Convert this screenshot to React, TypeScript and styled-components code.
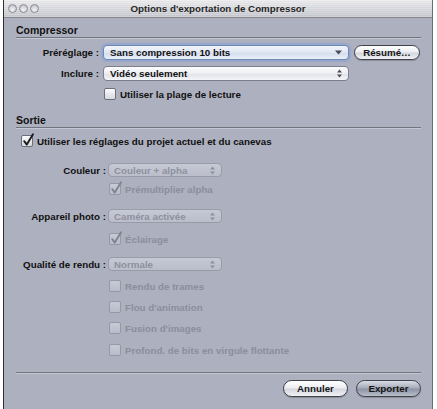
import React from 'react';
import styled, { createGlobalStyle, css } from 'styled-components';

const Global = createGlobalStyle`
  html, body { margin: 0; padding: 0; background: #ffffff; }
  body { font-family: "Liberation Sans", Arial, sans-serif; }
  * { box-sizing: border-box; }
`;

const Window = styled.div`
  margin-left: 3px;
  width: 430px;
  height: 409px;
  border-left: 1px solid #2e2f33;
  border-right: 1px solid #6a6c74;
  background: #adb0be;
  display: flex;
  flex-direction: column;
  overflow: hidden;
`;

const TitleBar = styled.div`
  height: 18px;
  flex: none;
  display: grid;
  grid-template-columns: 1fr auto 1fr;
  align-items: center;
  border-bottom: 1px solid #85878f;
  background:
    repeating-linear-gradient(180deg, rgba(255,255,255,0.18) 0 1px, rgba(0,0,0,0.02) 1px 2px),
    linear-gradient(#ececee, #d4d5da 60%, #c7c8ce);
`;

const Lights = styled.div`
  display: flex;
  gap: 2px;
  padding-left: 4px;
`;

const Light = styled.span`
  width: 9px;
  height: 9px;
  border-radius: 50%;
  border: 1px solid #8b8c93;
  background: radial-gradient(circle at 50% 70%, #f4f4f6, #c9cad0 70%, #b5b6bd);
`;

const Title = styled.div`
  font-weight: bold;
  font-size: 9.75px;
  color: #262626;
  white-space: nowrap;
`;

const Body = styled.div`
  padding: 0 11px 0 12px;
  display: flex;
  flex-direction: column;
`;

const SectionTitle = styled.div<{ $top: number }>`
  margin-top: ${(p) => p.$top}px;
  height: 14px;
  line-height: 12px;
  font-weight: bold;
  font-size: 10.5px;
  color: #111;
  border-bottom: 1px solid #72747e;
  box-shadow: 0 1px 0 rgba(220, 222, 230, 0.5);
`;

const FieldRow = styled.div<{ $top: number; $label: number; $gap: number; $indent?: number }>`
  margin-top: ${(p) => p.$top}px;
  padding-left: ${(p) => p.$indent ?? 0}px;
  display: grid;
  grid-template-columns: ${(p) => p.$label}px 1fr;
  column-gap: ${(p) => p.$gap}px;
  align-items: center;
`;

const Label = styled.div`
  text-align: right;
  font-weight: bold;
  font-size: 9.75px;
  color: #111;
  white-space: nowrap;
`;

const Controls = styled.div`
  display: flex;
  align-items: center;
  gap: 5px;
`;

type PopupState = 'focus' | 'normal' | 'disabled';

const Popup = styled.div<{ $width: number; $height: number; $state: PopupState }>`
  width: ${(p) => p.$width}px;
  height: ${(p) => p.$height}px;
  border-radius: 4px;
  display: flex;
  align-items: center;
  justify-content: space-between;
  padding: 0 6px 0 6px;
  font-weight: bold;
  font-size: 9.75px;
  white-space: nowrap;
  ${(p) =>
    p.$state === 'focus'
      ? css`
          color: #111;
          border: 1px solid #6f87b4;
          background: linear-gradient(#f3f6fc, #dfe6f3 50%, #d3dced 52%, #e9eef8);
          box-shadow: 0 0 1px 2px rgba(130, 160, 215, 0.55);
        `
      : p.$state === 'normal'
      ? css`
          color: #111;
          border: 1px solid #7c7f8c;
          background: linear-gradient(#fdfdfe, #eceef2 50%, #dfe2e8 52%, #f4f5f8);
        `
      : css`
          color: #8d909e;
          padding-left: 5px;
          border: 1px solid #989ba8;
          background: linear-gradient(#c6c9d4, #bbbeca);
        `}
`;

const PushButton = styled.div<{ $width: number; $height: number; $default?: boolean }>`
  width: ${(p) => p.$width}px;
  height: ${(p) => p.$height}px;
  border-radius: ${(p) => p.$height / 2}px;
  border: 1px solid #3f4148;
  display: flex;
  align-items: center;
  justify-content: center;
  font-weight: bold;
  font-size: 9.75px;
  color: #151515;
  box-shadow: 0 1px 1px rgba(0, 0, 0, 0.2);
  background: ${(p) =>
    p.$default
      ? 'linear-gradient(#d9dde6, #a7adbb 45%, #8c93a4 55%, #b9bfcc)'
      : 'linear-gradient(#ffffff, #eceef2 45%, #d3d6de 55%, #f1f2f5)'};
`;

const CheckRow = styled.label<{ $disabled?: boolean }>`
  display: flex;
  align-items: center;
  gap: 4px;
  font-weight: bold;
  font-size: 9.75px;
  white-space: nowrap;
  color: ${(p) => (p.$disabled ? '#8b8e9c' : '#111')};
`;

const Box = styled.span<{ $disabled?: boolean }>`
  position: relative;
  flex: none;
  width: 12px;
  height: 12px;
  border-radius: 2px;
  border: 1px solid ${(p) => (p.$disabled ? '#9598a6' : '#6c6f7a')};
  background: ${(p) =>
    p.$disabled
      ? 'linear-gradient(#c7cad5, #babdc9)'
      : 'linear-gradient(#fdfdfe, #e6e8ed 50%, #d8dbe2)'};
`;

const Tick = styled.svg`
  position: absolute;
  left: 0;
  top: -3px;
  overflow: visible;
`;

const Separator = styled.div<{ $top: number }>`
  margin-top: ${(p) => p.$top}px;
  height: 0;
  border-top: 1px solid #72747e;
  box-shadow: 0 1px 0 rgba(220, 222, 230, 0.5);
`;

const ButtonBar = styled.div<{ $top: number }>`
  margin-top: ${(p) => p.$top}px;
  display: flex;
  justify-content: flex-end;
  gap: 8px;
`;

const ArrowDown = ({ color }: { color: string }) => (
  <svg width="7" height="5" viewBox="0 0 7 5">
    <path d="M0 0.5 L7 0.5 L3.5 4.5 Z" fill={color} />
  </svg>
);

const ArrowsUpDown = ({ color }: { color: string }) => (
  <svg width="5" height="9" viewBox="0 0 5 9">
    <path d="M0 3.5 L5 3.5 L2.5 0.5 Z" fill={color} />
    <path d="M0 5.5 L5 5.5 L2.5 8.5 Z" fill={color} />
  </svg>
);

const Check = ({
  label,
  checked,
  disabled,
}: {
  label: string;
  checked?: boolean;
  disabled?: boolean;
}) => (
  <CheckRow $disabled={disabled}>
    <Box $disabled={disabled}>
      {checked && (
        <Tick width="12" height="14" viewBox="0 0 12 14">
          <path
            d="M2.2 8.2 L4.8 11.6 L11 1.2"
            fill="none"
            stroke={disabled ? '#7f8291' : '#1b1b1b'}
            strokeWidth="1.9"
            strokeLinecap="round"
            strokeLinejoin="round"
          />
        </Tick>
      )}
    </Box>
    {label}
  </CheckRow>
);

const Select = ({
  text,
  width,
  height,
  state,
  pulldown,
}: {
  text: string;
  width: number;
  height: number;
  state: PopupState;
  pulldown?: boolean;
}) => {
  const c = state === 'disabled' ? '#8d909e' : '#4a4c55';
  return (
    <Popup $width={width} $height={height} $state={state}>
      <span>{text}</span>
      {pulldown ? <ArrowDown color={c} /> : <ArrowsUpDown color={c} />}
    </Popup>
  );
};

export default function App() {
  return (
    <>
      <Global />
      <Window>
        <TitleBar>
          <Lights>
            <Light />
            <Light />
            <Light />
          </Lights>
          <Title>Options d'exportation de Compressor</Title>
          <span />
        </TitleBar>
        <Body>
          <SectionTitle $top={6}>Compressor</SectionTitle>

          <FieldRow $top={7} $label={83} $gap={4}>
            <Label>Préréglage :</Label>
            <Controls>
              <Select text="Sans compression 10 bits" width={246} height={15} state="focus" pulldown />
              <PushButton $width={66} $height={15}>Résumé…</PushButton>
            </Controls>
          </FieldRow>
          <FieldRow $top={6} $label={83} $gap={4}>
            <Label>Inclure :</Label>
            <Select text="Vidéo seulement" width={246} height={15} state="normal" />
          </FieldRow>
          <FieldRow $top={7} $label={83} $gap={5}>
            <span />
            <Check label="Utiliser la plage de lecture" />
          </FieldRow>

          <SectionTitle $top={14}>Sortie</SectionTitle>

          <FieldRow $top={7} $label={0} $gap={0} $indent={5}>
            <span />
            <Check label="Utiliser les réglages du projet actuel et du canevas" checked />
          </FieldRow>

          <FieldRow $top={16} $label={90} $gap={2}>
            <Label>Couleur :</Label>
            <Select text="Couleur + alpha" width={114} height={14} state="disabled" />
          </FieldRow>
          <FieldRow $top={6} $label={90} $gap={3}>
            <span />
            <Check label="Prémultiplier alpha" checked disabled />
          </FieldRow>

          <FieldRow $top={14} $label={90} $gap={2}>
            <Label>Appareil photo :</Label>
            <Select text="Caméra activée" width={114} height={14} state="disabled" />
          </FieldRow>
          <FieldRow $top={10} $label={90} $gap={3}>
            <span />
            <Check label="Éclairage" checked disabled />
          </FieldRow>

          <FieldRow $top={12} $label={90} $gap={2}>
            <Label>Qualité de rendu :</Label>
            <Select text="Normale" width={114} height={14} state="disabled" />
          </FieldRow>
          <FieldRow $top={9} $label={90} $gap={3}>
            <span />
            <Check label="Rendu de trames" disabled />
          </FieldRow>
          <FieldRow $top={9} $label={90} $gap={3}>
            <span />
            <Check label="Flou d'animation" disabled />
          </FieldRow>
          <FieldRow $top={9} $label={90} $gap={3}>
            <span />
            <Check label="Fusion d'images" disabled />
          </FieldRow>
          <FieldRow $top={10} $label={90} $gap={3}>
            <span />
            <Check label="Profond. de bits en virgule flottante" disabled />
          </FieldRow>

          <Separator $top={16} />

          <ButtonBar $top={7}>
            <PushButton $width={65} $height={17}>Annuler</PushButton>
            <PushButton $width={65} $height={17} $default>Exporter</PushButton>
          </ButtonBar>
        </Body>
      </Window>
    </>
  );
}
